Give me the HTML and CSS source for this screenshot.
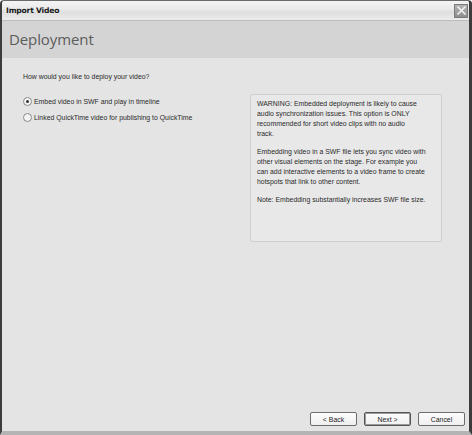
FILE: index.html
```html
<!DOCTYPE html>
<html>
<head>
<meta charset="utf-8">
<link rel="stylesheet" href="styles.css">
</head>
<body>
<div class="dialog">
  <div class="titlebar">
    <span class="title">Import Video</span>
    <span class="close">
      <svg width="11" height="11" viewBox="0 0 11 11"><path d="M1.5 1.5 L9.5 9.5 M9.5 1.5 L1.5 9.5" stroke="#f4f4f4" stroke-width="1.6" fill="none"/></svg>
    </span>
  </div>
  <div class="header">Deployment</div>
  <div class="body">
    <div class="content">
      <div class="left">
        <p class="question">How would you like to deploy your video?</p>
        <label class="radio"><span class="dot checked"></span>Embed video in SWF and play in timeline</label>
        <label class="radio"><span class="dot"></span>Linked QuickTime video for publishing to QuickTime</label>
      </div>
      <div class="info">
        <p>WARNING: Embedded deployment is likely to cause<br>audio synchronization issues. This option is ONLY<br>recommended for short video clips with no audio<br>track.</p>
        <p>Embedding video in a SWF file lets you sync video with<br>other visual elements on the stage. For example you<br>can add interactive elements to a video frame to create<br>hotspots that link to other content.</p>
        <p>Note: Embedding substantially increases SWF file size.</p>
      </div>
    </div>
    <div class="buttons">
      <button class="btn">&lt; Back</button>
      <button class="btn default">Next &gt;</button>
      <button class="btn cancel">Cancel</button>
    </div>
  </div>
</div>
</body>
</html>
```

FILE: styles.css
```css
html, body {
  margin: 0;
  padding: 0;
  background: #ffffff;
}

body {
  width: 472px;
  height: 435px;
  font-family: "Liberation Sans", Arial, sans-serif;
  font-size: 6.9px;
  color: #2a2a2a;
}

.dialog {
  width: 472px;
  height: 435px;
  box-sizing: border-box;
  display: flex;
  flex-direction: column;
  border-left: 2px solid #3c3c3c;
  border-right: 3px solid #3c3c3c;
  border-top: 1px solid #6a6a6a;
  border-bottom: 4px solid #b4b4b4;
  border-radius: 4px 4px 0 0;
  background: #e4e4e4;
}

.titlebar {
  height: 19px;
  flex: none;
  display: flex;
  align-items: center;
  justify-content: space-between;
  padding: 0 1px 0 4px;
  background: linear-gradient(#f4f4f4, #ebebeb 40%, #dedede 60%, #ececec);
  border-bottom: 1px solid #bcbcbc;
  border-radius: 3px 3px 0 0;
}

.title {
  font-family: "DejaVu Sans", sans-serif;
  font-weight: bold;
  font-size: 7.6px;
  color: #1a1a1a;
  letter-spacing: -0.2px;
}

.close {
  width: 14px;
  height: 14px;
  display: flex;
  align-items: center;
  justify-content: center;
  background: linear-gradient(#b4b4b4, #8e8e8e);
  border: 1px solid #7a7a7a;
  box-sizing: border-box;
}

.header {
  height: 37px;
  flex: none;
  box-sizing: border-box;
  padding: 8px 0 0 7px;
  background: #d4d4d4;
  font-family: "Open Sans", "Liberation Sans", sans-serif;
  font-size: 15px;
  color: #5c5c5c;
  letter-spacing: -0.1px;
}

.body {
  flex: 1;
  display: flex;
  flex-direction: column;
  padding: 14px 3px 5px 21px;
}

.content {
  flex: 1;
  display: flex;
}

.left {
  width: 227px;
}

.question {
  margin: 0 0 14px 0;
  line-height: 10px;
}

.radio {
  display: flex;
  align-items: center;
  height: 10px;
  margin-bottom: 6px;
  white-space: nowrap;
}

.dot {
  width: 7px;
  height: 7px;
  border: 1px solid #8a8a8a;
  border-radius: 50%;
  background: #f4f4f4;
  margin-right: 2px;
  display: flex;
  align-items: center;
  justify-content: center;
  flex: none;
}

.dot.checked::after {
  content: "";
  width: 3px;
  height: 3px;
  border-radius: 50%;
  background: #333;
}

.info {
  margin-top: 22px;
  width: 192px;
  height: 148px;
  box-sizing: border-box;
  border: 1px solid #cfcfcf;
  border-radius: 2px;
  background: #e8e8e8;
  padding: 4px 6px;
  line-height: 10px;
}

.info p {
  margin: 0 0 8px 0;
  white-space: nowrap;
}

.buttons {
  display: flex;
  justify-content: flex-end;
  gap: 7px;
  padding-right: 1px;
}

.btn {
  width: 47px;
  height: 14px;
  padding: 0;
  font-family: "Liberation Sans", Arial, sans-serif;
  font-size: 6.9px;
  color: #222;
  background: linear-gradient(#fdfdfd, #efefef);
  border: 1px solid #6c6c6c;
  border-radius: 2px;
}

.btn.default {
  border-color: #555;
  box-shadow: inset 0 0 0 1px #9a9a9a;
}
```
